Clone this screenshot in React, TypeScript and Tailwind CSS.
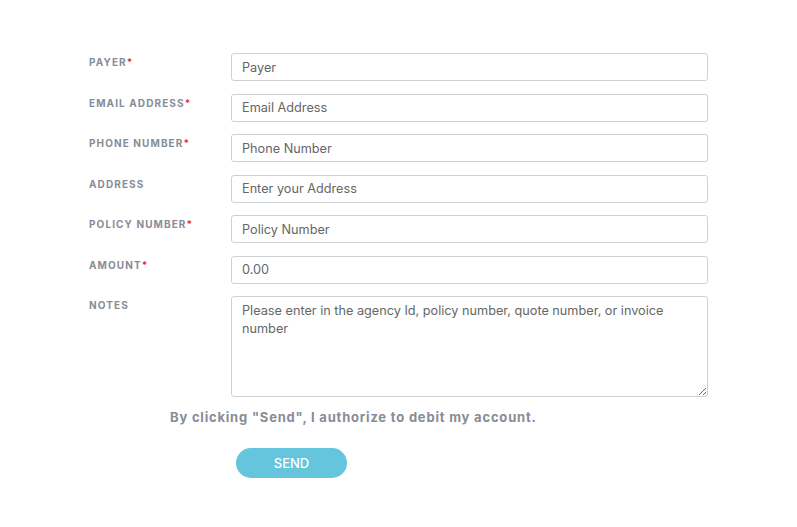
const FONT = { fontFamily: "Inter, 'Noto Sans', sans-serif" };

const FIELDS: { label: string; placeholder: string; required?: boolean }[] = [
  { label: "PAYER", placeholder: "Payer", required: true },
  { label: "EMAIL ADDRESS", placeholder: "Email Address", required: true },
  { label: "PHONE NUMBER", placeholder: "Phone Number", required: true },
  { label: "ADDRESS", placeholder: "Enter your Address" },
  { label: "POLICY NUMBER", placeholder: "Policy Number", required: true },
  { label: "AMOUNT", placeholder: "0.00", required: true },
];

function Label({ text, required }: { text: string; required?: boolean }) {
  return (
    <div className="w-[142px] shrink-0 pt-[2px] text-[10px] font-bold leading-[14px] tracking-[1.1px] text-[#878c96]">
      {text}
      {required && <span className="text-[#e8303a]">*</span>}
    </div>
  );
}

export default function App() {
  return (
    <div className="min-h-[527px] bg-white pl-[89px] pt-[53px]" style={FONT}>
      <div className="flex flex-col gap-[12.5px]">
        {FIELDS.map((f) => (
          <div key={f.label} className="flex">
            <Label text={f.label} required={f.required} />
            <input
              placeholder={f.placeholder}
              className="h-[28px] w-[477px] rounded-[3px] border border-[#cdd0d4] px-[10px] text-[12.7px] text-[#666] placeholder:text-[#666] focus:outline-none"
            />
          </div>
        ))}
        <div className="flex">
          <Label text="NOTES" />
          <textarea
            placeholder="Please enter in the agency Id, policy number, quote number, or invoice number"
            className="h-[101px] w-[477px] rounded-[3px] border border-[#cdd0d4] px-[10px] py-[5px] text-[12.7px] leading-[18px] text-[#666] placeholder:text-[#666] focus:outline-none"
          />
        </div>
      </div>

      <p className="mt-[11px] pl-[81px] text-[13px] font-bold leading-[18px] tracking-[0.8px] text-[#878c96]">
        By clicking "Send", I authorize to debit my account.
      </p>

      <button className="ml-[147px] mt-[22px] h-[30px] w-[111px] rounded-full bg-[#64c5dc] pt-[1px] text-[13px] font-medium text-white">
        SEND
      </button>
    </div>
  );
}
